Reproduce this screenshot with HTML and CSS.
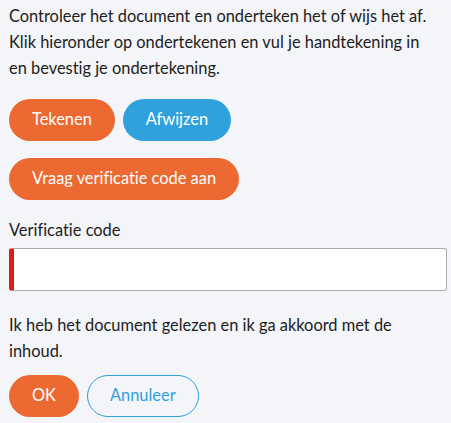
FILE: index.html
```html
<!DOCTYPE html>
<html lang="nl">
<head>
<meta charset="utf-8">
<link rel="stylesheet" href="styles.css">
</head>
<body>
<main class="panel">
  <p class="intro">Controleer het document en onderteken het of wijs het af. Klik hieronder op ondertekenen en vul je handtekening in en bevestig je ondertekening.</p>
  <div class="actions">
    <button class="btn btn-orange">Tekenen</button>
    <button class="btn btn-blue">Afwijzen</button>
  </div>
  <div class="actions request">
    <button class="btn btn-orange">Vraag verificatie code aan</button>
  </div>
  <label class="label" for="code">Verificatie code</label>
  <input class="field" id="code" type="text">
  <p class="agree">Ik heb het document gelezen en ik ga akkoord met de inhoud.</p>
  <div class="actions final">
    <button class="btn btn-orange">OK</button>
    <button class="btn btn-outline">Annuleer</button>
  </div>
</main>
</body>
</html>
```
FILE: styles.css
```css
html, body {
  margin: 0;
  background: #f4f5f9;
}
body {
  font-family: "Lato", sans-serif;
  font-size: 16.4px;
  line-height: 26px;
  color: #1c1c1c;
  font-variant-ligatures: no-common-ligatures;
}
.panel {
  display: flex;
  flex-direction: column;
  align-items: flex-start;
  padding: 3px 4px 0 9px;
}
.intro {
  margin: 0;
  max-width: 424px;
}
.actions {
  display: flex;
  gap: 8px;
  margin-top: 18px;
}
.request {
  margin-top: 17px;
}
.final {
  margin-top: 11px;
}
.btn {
  font-family: "Lato", sans-serif;
  font-size: 16.4px;
  font-variant-ligatures: no-common-ligatures;
  line-height: 22px;
  height: 42px;
  padding: 9px 23px 11px;
  border: 0;
  border-radius: 21px;
  color: #ffffff;
  cursor: pointer;
}
.btn-orange {
  background: #ec6a32;
}
.btn-blue {
  background: #2fa1dd;
}
.btn-outline {
  background: transparent;
  color: #2fa1dd;
  border: 1px solid #2fa1dd;
  padding: 8px 22px 10px;
}
.label {
  margin-top: 17px;
}
.field {
  box-sizing: border-box;
  align-self: stretch;
  margin-top: 5px;
  height: 43px;
  background: #ffffff;
  border: 1px solid #a9a9ad;
  border-left: 5px solid #e01b16;
  border-radius: 3px;
  font: inherit;
  padding: 0 10px;
}
.agree {
  margin: 21px 0 0;
}
```
